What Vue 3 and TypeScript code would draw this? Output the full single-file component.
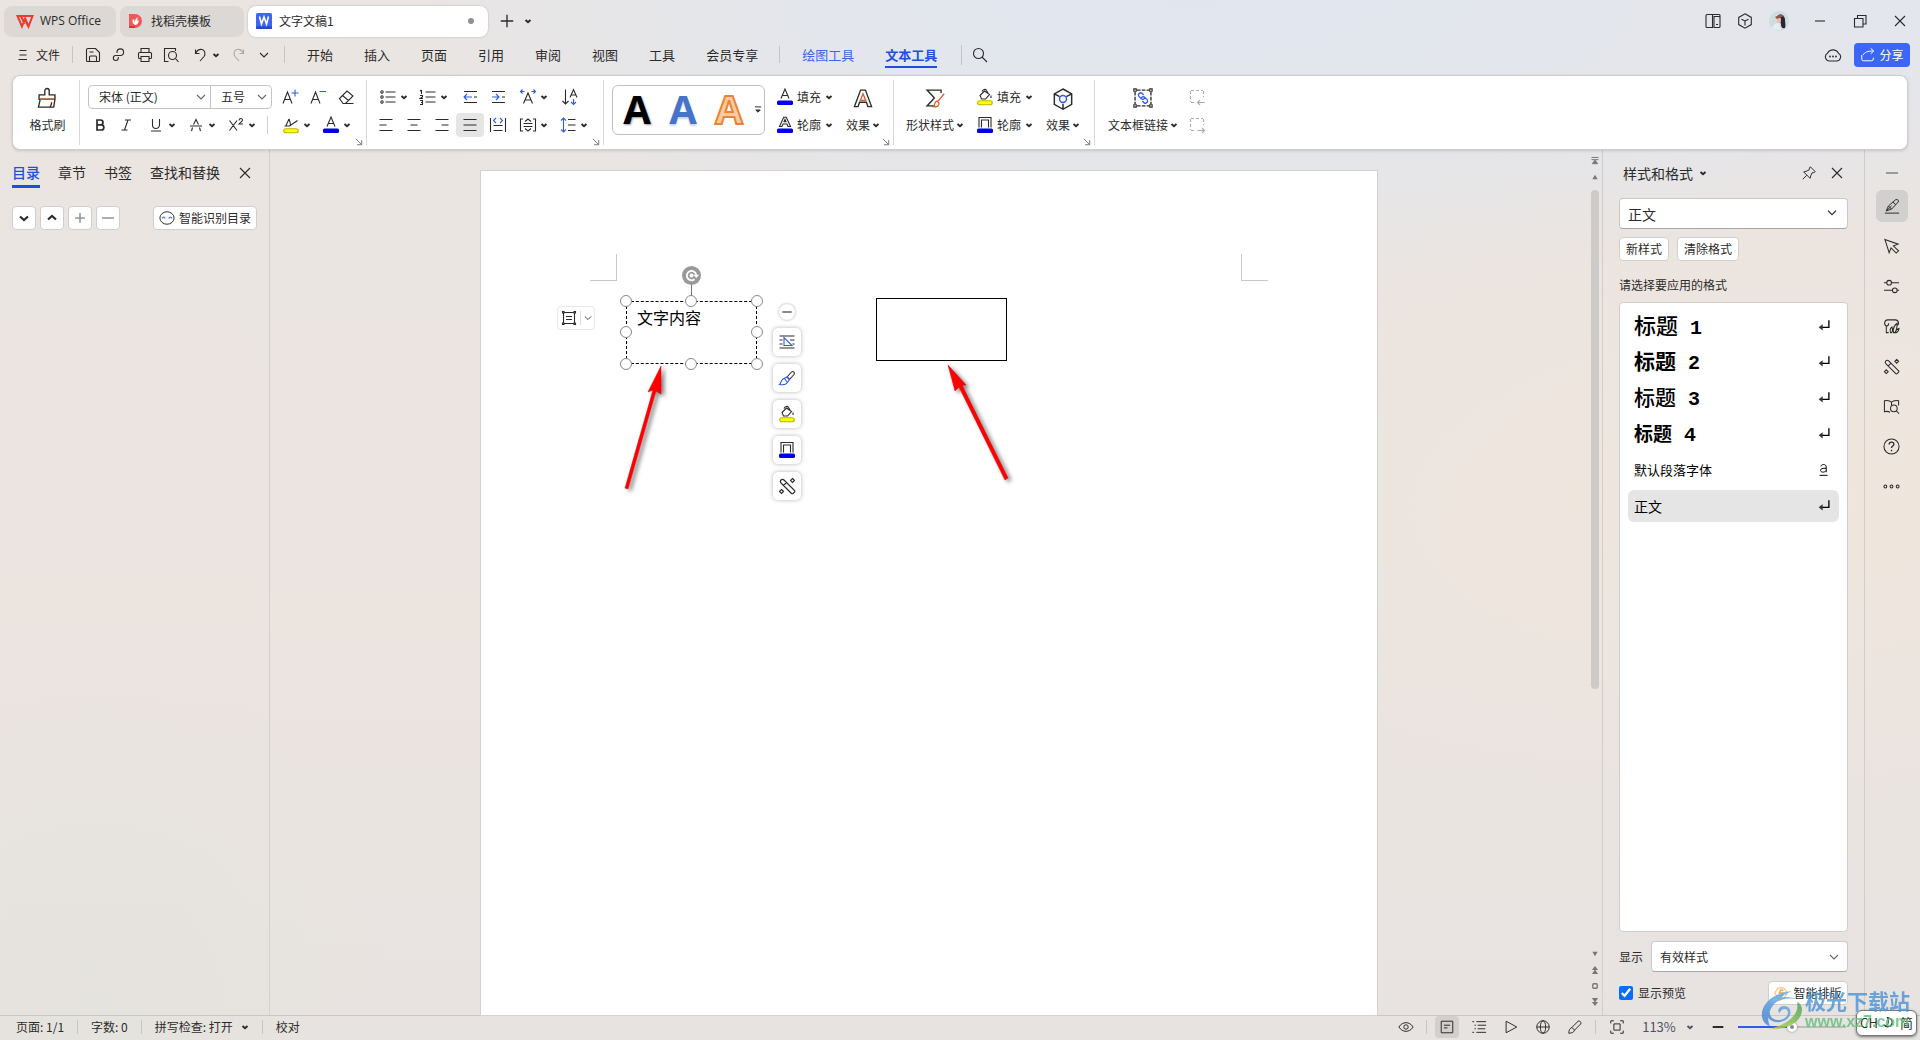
<script setup lang="ts">
import { h, ref, type FunctionalComponent } from 'vue'

const icons: Record<string, string> = {
  chev: '<path d="M6.500 8l2.500 2.300 2.500-2.300" stroke-width="1.900"/>',
  chevThin: '<path d="M5 7l4 4 4-4"/>',
  chevWide: '<path d="M4.500 6.500l4.500 4.500 4.500-4.500" stroke-width="1.300"/>',
  down: '<path d="M5 7.500l4 3.500 4-3.500" stroke-width="2.200"/>',
  up: '<path d="M5 10.500l4-3.500 4 3.500" stroke-width="2.200"/>',
  plus: '<path d="M9 4v10M4 9h10" stroke-width="1.600"/>',
  plusBig: '<path d="M9 2v14M2 9h14" stroke-width="1.500"/>',
  minus: '<path d="M3 9h12" stroke-width="1.600"/>',
  minusBold: '<path d="M3 9h12" stroke-width="2.200"/>',
  close: '<path d="M4 4l10 10M14 4L4 14"/>',
  menu: '<path d="M5.500 4.500h7M5.500 9h7M4.500 13.500h8.500"/>',
  wps: '<path d="M1.500 4h15l-4 10.500-3.300-8-3.300 8z M5 4l3.500 8M9.500 8.500L12 14" stroke="#f0382d" stroke-width="2"/>',
  docer: '<path d="M2 2h6a7 7 0 0 1 0 14H2z" fill="#f0565a" stroke="none"/><path d="M2 14h6v2H2z" fill="#d8363c" stroke="none"/><path d="M8 13c-3-2-3-4-2-6 1 1 1.500 1.500 1.800 3 .2-2 1-3.500 2.700-5 0 2 0 2.500-.5 4l1.500-1c.5 2.500-1 5-3.500 5z" fill="#fff" stroke="none"/>',
  word: '<rect x="1" y="1" width="16" height="16" rx="1.500" fill="#3d66f5" stroke="none"/><path d="M1 14.500h16v1a1.500 1.500 0 0 1-1.500 1.500h-13A1.500 1.500 0 0 1 1 15.500z" fill="#2247c9" stroke="none"/><path d="M4.500 4.500l2 7.500L9 5l2.500 7 2-7.500" stroke="#fff" stroke-width="1.600"/>',
  save: '<path d="M2.500 4a1.500 1.500 0 0 1 1.500-1.500h7.500l4 4v8a1 1 0 0 1-1 1h-11a1 1 0 0 1-1-1zM5.500 6h4M5.500 15.500V11a1 1 0 0 1 1-1h5a1 1 0 0 1 1 1v4.500"/>',
  link: '<path d="M7 7V6a3.300 3.300 0 1 1 3.300 3.500H5.800a2.500 2.500 0 1 0 2.500 2.500v-1"/>',
  print: '<path d="M5 6.500v-4h8v4M5 12.500H3.500a1 1 0 0 1-1-1v-4a1 1 0 0 1 1-1h11a1 1 0 0 1 1 1v4a1 1 0 0 1-1 1H13M5 10.500h8v5H5z"/>',
  preview: '<path d="M6.500 15.500h-4v-13h11V5"/><circle cx="10.500" cy="9.500" r="4"/><path d="M13.500 12.500l3 3.500"/>',
  undo: '<path d="M4.500 3.500v4h4M4.500 7.500c1.500-3 4-4.500 6.500-4 3 .7 3.800 4.500 2 7L9 15"/>',
  redo: '<path d="M13.500 3.500v4h-4M13.500 7.500c-1.500-3-4-4.500-6.500-4-3 .7-3.800 4.500-2 7L9 15"/>',
  search: '<circle cx="7.500" cy="7.500" r="5"/><path d="M11 11l5 5"/>',
  panel: '<path d="M3 2.500h5.500v13H3a1 1 0 0 1-1-1v-11a1 1 0 0 1 1-1zM10 4.500h5a1 1 0 0 1 1 1v9a1 1 0 0 1-1 1h-5zM8.500 2.500h6.500a1 1 0 0 1 1 1v2M12 12.500h2"/>',
  cube: '<path d="M9 1.800l6.300 3.600v7.200L9 16.200l-6.300-3.600V5.400zM5.500 7.200L9 9l3.500-1.800M9 9v4.500"/>',
  restore: '<path d="M6.500 6V3.500h8.500v8.500h-2.500M3.500 6.500h8.500v8.500H3.500z"/>',
  winMin: '<path d="M4 9h10"/>',
  cloud: '<path d="M6 15a4.200 4.200 0 0 1-2.500-7.800 6.200 6.200 0 0 1 11 0A4.200 4.200 0 0 1 12 15z"/><path d="M6 10.500h.01M9 10.500h.01M12 10.500h.01" stroke-width="1.800" stroke-linecap="round"/>',
  share: '<path d="M2 9v4.500a2 2 0 0 0 2 2h9a2 2 0 0 0 2-2V12M3.500 9c1.500-3 5-4.500 11.500-4.500M12 1.500l3.500 3L12 7.500"/>',
  brush: '<path d="M7.200 6.500V3a1.800 1.800 0 0 1 3.600 0v3.500h4.700V10H2.500V6.500zM3.500 10L2 16.500h12.500l1-6.500"/><path d="M3 10h12" stroke="#d9622b"/><path d="M11.500 16.500c1-1.500 1.200-2.500 1.300-4"/>',
  grow: '<path d="M2 15.500L6.500 4 11 15.500M3.500 11.500h6"/><path d="M10.500 5h7M14 1.500v7" stroke="#2f5be6"/>',
  shrink: '<path d="M2 15.500L6.500 4 11 15.500M3.500 11.500h6"/><path d="M10.500 3.500h6.500" stroke="#2f5be6"/>',
  eraser: '<path d="M2.500 10.500l7.500-7.500 6 5-7.500 7.500H6zM5.500 7.500l6 5M6 15.500h10.500"/>',
  bold: '<path d="M6 4h3.500a2.400 2.400 0 0 1 0 4.900H6zM6 8.900h4.300a2.500 2.500 0 0 1 0 5.100H6z" stroke-width="1.700"/>',
  italic: '<path d="M8 4h6M4.500 14h6M11 4L7.500 14"/>',
  underline: '<path d="M5.500 3v6a3.500 3.500 0 0 0 7 0V3M4 15h10"/>',
  strike: '<path d="M3 10h12M6.500 8.500L9 3.500l2.500 5M5.500 11.500L4.500 15M12.500 11.500l1 3.500"/>',
  sup: '<path d="M2.500 4.500l7.500 10M10 4.500l-7.500 10M12 4.500c0-2.500 3.500-2.500 3.500-.5 0 1.500-2.500 2.500-3.500 4h4"/>',
  marker: '<path d="M2.500 10h5l8-5.500M7 3L4 9.500M7 3c1.500 3.500 1.500 5 1.500 7" /><rect x="1.700" y="12.700" width="14.600" height="4" rx="2" fill="#ffff00" stroke="#bdb800"/>',
  fontColor: '<path d="M5 10.500L9 1l4 9.500M6.500 7.500h5"/><rect x="1" y="12.500" width="16" height="4.500" rx="1.500" fill="#0000f0" stroke="none"/>',
  fontOutline: '<path d="M3.500 10.500L7.700 1.200h2.600l4.200 9.300H12L11 8H7l-1 2.500zM8 5.800h2L9 3.500z"/><rect x="1" y="12.500" width="16" height="4.500" rx="1.500" fill="#0000f0" stroke="none"/>',
  bucket: '<path d="M4 7.500L8.500 3l5 3.500-4 4.500h-4zM6 3.500c1-2 3.500-3 4.500-1L12 5M15 7.500v2.500"/><rect x="1.700" y="12.700" width="14.600" height="4" rx="2" fill="#ffff00" stroke="#bdb800"/>',
  frameColor: '<path d="M3 11.500V1.500h12v10M5.500 11.500V4h7v7.500"/><rect x="1" y="12.500" width="16" height="4.500" rx="1.500" fill="#0000f0" stroke="none"/>',
  bullets: '<circle cx="3" cy="4" r="1.200"/><circle cx="3" cy="9" r="1.200"/><circle cx="3" cy="14" r="1.200"/><path d="M6.500 4h10M6.500 9h10M6.500 14h10"/>',
  numbers: '<path d="M2.500 2v4M1 3l1.500-1M1 7.500h2.500V9L1 10.500h3M1 12.500h2.500v4H1M2 14.500h1.500M6.500 4h10M6.500 9h10M6.500 14h10"/>',
  outdent: '<path d="M3 3.500h13M13 9h3M3 14.500h13"/><path d="M11 9H3M6 6L3 9l3 3" stroke="#2f5be6"/>',
  indent: '<path d="M3 3.500h13M13 9h3M3 14.500h13"/><path d="M3 9h7M7 6l3 3-3 3" stroke="#2f5be6"/>',
  scaleA: '<path d="M4.500 15.500L9 5l4.500 10.500M6 12h6"/><path d="M1.500 3.500h4M3.500 1.500l-2 2 2 2M16.500 3.500h-4M14.500 1.500l2 2-2 2" stroke="#2f5be6"/>',
  sort: '<path d="M4.500 1.500v14.500M1.500 13l3 3 3-3M9 9.500l3.500-8 3.500 8M10 7h5"/><path d="M12.500 11v5.500M10 14l2.500 2.500 2.500-2.500" stroke="#2f5be6"/>',
  left: '<path d="M2.500 3.500h13M2.500 9h7M2.500 14.500h13"/>',
  center: '<path d="M2.500 3.500h13M5.500 9h7M2.500 14.500h13"/>',
  right: '<path d="M2.500 3.500h13M8.500 9h7M2.500 14.500h13"/>',
  justify: '<path d="M2.500 3.500h13M2.500 9h13M2.500 14.500h13"/>',
  distribute: '<path d="M1.500 2v14M16.500 2v14M4.500 9.500h9M4.500 14.500h9"/><path d="M7 2L4.500 4.500 7 7M11 2l2.500 2.500L11 7" stroke="#2f5be6"/>',
  fitText: '<path d="M4 3H1.500v12H4M14 3h2.500v12H14M6 5.500L9 3l3 2.500M4.500 7.500h9M4.500 10.500h9M6 12.500L9 15l3-2.500"/>',
  lineSpace: '<path d="M9 3.500h7.500M9 9h7.500M9 14.500h7.500"/><path d="M4.500 2v14M2 4.500L4.500 2 7 4.500M2 13.500L4.500 16 7 13.500" stroke="#2f5be6"/>',
  more: '<path d="M5.500 5.500h7M6.500 9h5L9 11.500z" fill="#444"/>',
  launcher: '<path d="M5 5l7 7M12.500 6.500v6h-6"/>',
  textFx: '<path d="M2 16L7 2.500h4L16 16h-3l-1.200-3.500H6.200L5 16z"/><path d="M6.800 11L9 5.500l2.200 5.500z" stroke="#d9622b"/>',
  shapeStyle: '<path d="M14 5V2.500H2.500L8.500 9l-6 6.500H9"/><path d="M16.500 5.500l-5 6M10.500 11.500c-2 .3-1 3-3 4.500 3 .5 5-.5 4.800-2.800z" stroke="#d9622b"/>',
  shapeFx: '<path d="M9 1.500l6.500 3.700v7.800L9 16.700 2.500 13V5.200zM2.500 5.200l4 2M15.500 5.200l-4 2M9 12.500v4"/><circle cx="9" cy="9" r="2.600" stroke="#2f5be6"/>',
  boxLink: '<path d="M4 2.500h10M4 15.500h10M2.500 4v10M15.500 4v10" stroke-dasharray="3 1"/><path d="M1.500 1.500h2v2h-2zM14.500 1.500h2v2h-2zM1.500 14.500h2v2h-2zM14.500 14.500h2v2h-2z" stroke-width=".9"/><path d="M9.500 6.500L8 5C6.500 4 4.500 6 5.500 7.500l2 2c1 1 3 .5 3-1M8.500 11.500L10 13c1.500 1 3.500-1 2.500-2.500l-2-2c-1-1-3-.5-3 1" stroke="#2f5be6"/>',
  boxPrev: '<path d="M2.500 3v11M15.500 3v6M3 2.500h12M3 14.500h4" stroke-dasharray="3 2"/><path d="M9.500 14.500h7M12 12l-2.500 2.500L12 17"/>',
  boxNext: '<path d="M2.500 3v11M15.500 3v6M3 2.500h12M3 14.500h4" stroke-dasharray="3 2"/><path d="M9.500 14.500h7M14 12l2.500 2.500L14 17"/>',
  smart: '<ellipse cx="9" cy="9" rx="8" ry="7"/><path d="M3.500 9.500c.7-2 2.500-2 3.500 0M11 9.500c1-2 2.800-2 3.500 0" stroke="#4a7bf0" stroke-width="1.400"/>',
  pin: '<path d="M10.500 2l5.500 5.500-1.500 1-2 .3L11 12l-.8 3L3 7.800 6 7l3.200-1.500.3-2zM6.500 11.500L2 16"/>',
  pencil: '<path d="M1 17h16M2.500 14.500l2.500-5.500 8-7c2-1 4 .5 3 2.500l-7.500 8zM5 9l3.500 3.500M2.500 14.500l6-5.500M10 4.500l3.500 3.200"/>',
  cursor: '<path d="M2 1.500l14 5-5 2 5.500 5-2.500 2.500-5.500-5.500-2 5z"/>',
  sliders: '<path d="M1 5h3M9 5h8M1 13h9M15 13h2"/><circle cx="6.500" cy="5" r="2.500"/><circle cx="12.500" cy="13" r="2.500"/>',
  gallery: '<path d="M6 15.500H3.500v-7M3.500 8.500c-3-1.500-2-6.500 1.500-6.500h8c3.500 0 4.500 4 2.500 5.500M3.500 8.500c1.500 0 2.500-1 2.500-3M8 15.500c-1-3 0-5 1.500-6 1 3 .5 5-.5 6zM11 15.500c-.5-4 1-8 4-10 0 4-1 8-2.500 10zM13 15.500c.5-3 2-4 4-4.500-.5 3-1.500 4-3 4.500z"/>',
  wand: '<path d="M3 6a2 2 0 0 1 3-3l10.500 10.500a1 1 0 0 1 0 1.500L15 16.500a1 1 0 0 1-1.500 0zM8.500 5.500l-3 3"/><path d="M14.500 1.500L16.500 3.500 14.500 5.500 12.500 3.500zM3.500 12.500l2 2-2 2-2-2z"/>',
  book: '<path d="M9 4.500C7 2.500 4 2.500 1.500 3v11.500c2-.5 4-.5 6 .5M9 4.500c2-2 5-2 7.500-1.500v5M9 4.500V8"/><circle cx="11.500" cy="11" r="3.500"/><path d="M14 13.500l3 3"/>',
  help: '<circle cx="9" cy="9" r="8"/><path d="M6.500 7c0-3.500 5-3.500 5-.5 0 2-2.500 2-2.500 4M9 12.500v1.500" stroke-width="1.400"/>',
  dots: '<circle cx="2.500" cy="9" r="1.500"/><circle cx="9" cy="9" r="1.500"/><circle cx="15.500" cy="9" r="1.500"/>',
  ret: '<path d="M14.500 2.500v8H5" stroke-width="1.500"/><path d="M7.500 7v7L3 10.500z" fill="#333" stroke="none"/>',
  charA: '<path d="M5.500 5c.5-3 6-3 6 .5v6M11.500 7c-4 0-6.500.5-6.500 2.500s4.500 3 6.500 0M4 15h9"/>',
  eye: '<path d="M1 9c4-6.500 12-6.500 16 0-4 6.500-12 6.500-16 0z"/><circle cx="9" cy="9" r="2.500"/>',
  pageView: '<path d="M2.500 2.500h13v13h-13zM5.500 7h7M5.500 10h4"/>',
  outline: '<path d="M1.500 3h2M6 3h11M4 7h1.500M7.500 7H17M4 11h1.500M7.500 11H16M1.500 15h2M6 15h11"/>',
  play: '<path d="M3.500 2.500l12 6.500-12 6.500z"/>',
  globe: '<circle cx="9" cy="9" r="7"/><ellipse cx="9" cy="9" rx="3" ry="7"/><path d="M2 9h14"/>',
  pen: '<path d="M2 16c0-3 1-5.500 3.500-6.500l7-7c1.500-1 4 1 3 3l-7 7C8 15 5 16 2 16zM5.500 9.500l3 3"/>',
  fit: '<path d="M2 5V2h3.500M12.500 2H16v3M16 13v3h-3.500M5.500 16H2v-3M5.500 5.500h7v7h-7z"/>',
  layout: '<path d="M4 3.500h10M4 14.500h10M3.500 4v10M14.500 4v10M6 7.500h6M6 10.500h6"/><path d="M2.500 2.500h1.500v1.500H2.500zM14 2.500h1.500v1.500H14zM2.500 14h1.500v1.500H2.500zM14 14h1.500v1.500H14z"/>',
  wrap: '<path d="M1.500 3h15M1.500 7h3M12 7h4.500M1.500 11h3M14.500 11h2M1.500 15h15"/><path d="M6 4.500v8h8z" stroke="#2f5be6" fill="#fff"/>',
  paint: '<path d="M9 8l4.500-5c1.200-1.500 4 .5 2.500 2.500l-4.500 5z"/><path d="M9 8l2.500 2.500-2 3c-2 3-5.500 2.500-8 2 1.500-1 1-4 3.500-5.500zM6.500 9.500L9 13" stroke="#2f5be6"/>',
  typeset: '<path d="M5 2.500h8L17 9l-4 6.500H5L1 9z" stroke="#f2a33c"/><path d="M12 5.500H8.500L7 9h4.500L10 12.500H6" stroke="#f2a33c" stroke-width="1.800"/>',
  toTop: '<path d="M5 5h8M5 7.500h8M9 8l3 4H6z" fill="#777" stroke="#777"/>',
  triUp: '<path d="M9 6.500l3 5H6z" fill="#777" stroke="none"/>',
  triDown: '<path d="M9 11.500l3-5H6z" fill="#777" stroke="none"/>',
  dblUp: '<path d="M9 4.500l3.500 4.500h-7zM9 8.500l3.500 5h-7z" fill="#777" stroke="none"/>',
  dblDown: '<path d="M9 13.500l3.500-4.500h-7zM9 9.500l3.500-5h-7z" fill="#777" stroke="none"/>',
  square: '<rect x="6.500" y="6.500" width="5" height="5" rx="1" stroke="#777" stroke-width="1.500"/>',
  moon: '<path d="M7 2c6 1 8 7 4 10.500C8 15 4 14 3 12c5 1 7-5 4-10z" stroke-width="1.300"/>',
}

const Icon: FunctionalComponent<{ name: string; size?: number | string }> = (props) =>
  h('svg', {
    class: 'icon',
    width: props.size ?? 18,
    height: props.size ?? 18,
    viewBox: '0 0 18 18',
    fill: 'none',
    stroke: 'currentColor',
    'stroke-width': 1.1,
    'aria-hidden': 'true',
    innerHTML: icons[props.name],
  })
Icon.props = ['name', 'size']

const quick = [
  ['save', '保存'],
  ['link', '输出'],
  ['print', '打印'],
  ['preview', '打印预览'],
]
const menus = ['开始', '插入', '页面', '引用', '审阅', '视图', '工具', '会员专享']
const aligns = ['left', 'center', 'right', 'justify', 'distribute']
const navTabs = ['目录', '章节', '书签', '查找和替换']
const navTools = ['down', 'up', 'plus', 'minus']
const floatTools = ['wrap', 'paint', 'bucket', 'frameColor', 'wand']
const rail = ['cursor', 'sliders', 'gallery', 'wand', 'book', 'help', 'dots']
const styles = [
  { text: '标题', level: ' 1', cls: 's1', mark: 'ret' },
  { text: '标题', level: ' 2', cls: 's2', mark: 'ret' },
  { text: '标题', level: ' 3', cls: 's3', mark: 'ret' },
  { text: '标题', level: ' 4', cls: 's4', mark: 'ret' },
  { text: '默认段落字体', level: '', cls: 's5', mark: 'charA' },
  { text: '正文', level: '', cls: 's6', mark: 'ret' },
]
const handles = ['nw', 'n', 'ne', 'w', 'e', 'sw', 's', 'se']
const current = ref(5)
const preview = ref(true)
const zoom = ref(50)
</script>

<template>
  <div class="app">
    <header class="title-bar">
      <button class="tab home"><Icon name="wps" />WPS Office</button>
      <button class="tab docer"><Icon name="docer" />找稻壳模板</button>
      <button class="tab doc active"><Icon name="word" />文字文稿1<span class="dirty"></span></button>
      <button class="tab-add" aria-label="新建"><Icon name="plusBig" size="16" /></button>
      <button class="tab-more" aria-label="标签列表"><Icon name="chev" /></button>
      <div class="spacer"></div>
      <button class="tb-icon" aria-label="侧栏"><Icon name="panel" /></button>
      <button class="tb-icon" aria-label="应用"><Icon name="cube" /></button>
      <button class="avatar" aria-label="账户">
        <svg width="20" height="20" viewBox="0 0 20 20">
          <circle cx="10" cy="10" r="10" fill="#cfdde2" />
          <path d="M9 4c4-1 7 1 7 5 0 3 1 5 0 8-3 1-4-1-4-4z" fill="#2c2430" />
          <path d="M8 6c2-1 4 0 4 3s-2 4-4 3z" fill="#e9bfae" />
          <path d="M6 6l6-3 3 2-7 3z" fill="#8d5a4a" />
          <path d="M3 18c1-4 3-6 7-6l2 7z" fill="#e4eef0" />
        </svg>
      </button>
      <button class="win" aria-label="最小化"><Icon name="winMin" /></button>
      <button class="win" aria-label="还原"><Icon name="restore" /></button>
      <button class="win" aria-label="关闭"><Icon name="close" /></button>
    </header>

    <nav class="menu-bar">
      <button class="file"><Icon name="menu" />文件</button>
      <i class="bar-line"></i>
      <div class="quick">
        <button v-for="q in quick" :key="q[0]" class="q-btn" :aria-label="q[1]"><Icon :name="q[0]" /></button>
        <button class="split" aria-label="撤销"><Icon name="undo" /><Icon class="c" name="chev" /></button>
        <button class="redo" aria-label="恢复"><Icon name="redo" /></button>
        <button class="q-more" aria-label="更多"><Icon name="chevThin" /></button>
      </div>
      <i class="bar-line"></i>
      <div class="menus">
        <a v-for="m in menus" :key="m" href="#">{{ m }}</a>
      </div>
      <i class="bar-line"></i>
      <div class="menus">
        <a href="#" class="tool">绘图工具</a>
        <a href="#" class="tool on">文本工具</a>
      </div>
      <i class="bar-line last"></i>
      <button class="find" aria-label="搜索"><Icon name="search" /></button>
      <div class="spacer"></div>
      <button class="cloud" aria-label="云同步"><Icon name="cloud" /></button>
      <button class="share"><Icon name="share" size="16" />分享</button>
    </nav>

    <section class="ribbon">
      <div class="group g-brush">
        <button class="big"><Icon name="brush" size="22" /><span>格式刷</span></button>
      </div>
      <div class="group g-font">
        <div class="row">
          <div class="combo">
            <label class="pick family">
              <select aria-label="字体"><option>宋体 (正文)</option></select><Icon name="chevThin" />
            </label>
            <label class="pick size">
              <select aria-label="字号"><option>五号</option></select><Icon name="chevThin" />
            </label>
          </div>
          <button class="ib" aria-label="增大字号"><Icon name="grow" /></button>
          <button class="ib" aria-label="减小字号"><Icon name="shrink" /></button>
          <button class="ib" aria-label="清除格式"><Icon name="eraser" /></button>
        </div>
        <div class="row">
          <button class="ib" aria-label="加粗"><Icon name="bold" /></button>
          <button class="ib" aria-label="倾斜"><Icon name="italic" /></button>
          <button class="split" aria-label="下划线"><Icon name="underline" /><Icon class="c" name="chev" /></button>
          <button class="split" aria-label="删除线"><Icon name="strike" /><Icon class="c" name="chev" /></button>
          <button class="split" aria-label="上标"><Icon name="sup" /><Icon class="c" name="chev" /></button>
          <i class="mini-line"></i>
          <button class="split" aria-label="突出显示"><Icon name="marker" /><Icon class="c" name="chev" /></button>
          <button class="split" aria-label="字体颜色"><Icon name="fontColor" /><Icon class="c" name="chev" /></button>
        </div>
        <button class="launch" aria-label="字体设置"><Icon name="launcher" size="14" /></button>
      </div>
      <div class="group g-para">
        <div class="row">
          <button class="split" aria-label="项目符号"><Icon name="bullets" /><Icon class="c" name="chev" /></button>
          <button class="split" aria-label="编号"><Icon name="numbers" /><Icon class="c" name="chev" /></button>
          <button class="ib after-split" aria-label="减少缩进"><Icon name="outdent" /></button>
          <button class="ib" aria-label="增加缩进"><Icon name="indent" /></button>
          <button class="split" aria-label="字符缩放"><Icon name="scaleA" /><Icon class="c" name="chev" /></button>
          <button class="ib wide" aria-label="排序"><Icon name="sort" /></button>
        </div>
        <div class="row">
          <button v-for="a in aligns" :key="a" class="ib" :class="{ pressed: a === 'justify' }" :aria-label="a">
            <Icon :name="a" />
          </button>
          <button class="split" aria-label="文本方向"><Icon name="fitText" /><Icon class="c" name="chev" /></button>
          <button class="split" aria-label="行距"><Icon name="lineSpace" /><Icon class="c" name="chev" /></button>
        </div>
        <button class="launch" aria-label="段落设置"><Icon name="launcher" size="14" /></button>
      </div>
      <div class="group g-art">
        <div class="gallery">
          <button class="art black">A</button>
          <button class="art blue">A</button>
          <button class="art orange">A</button>
          <button class="gal-more" aria-label="更多样式"><Icon name="more" size="16" /></button>
        </div>
        <div class="stack">
          <button class="lab"><Icon name="fontColor" />填充<Icon class="c" name="chev" /></button>
          <button class="lab"><Icon name="fontOutline" />轮廓<Icon class="c" name="chev" /></button>
        </div>
        <button class="big fx"><Icon name="textFx" size="22" /><span>效果<Icon class="c" name="chev" /></span></button>
        <button class="launch" aria-label="文本效果设置"><Icon name="launcher" size="14" /></button>
      </div>
      <div class="group g-shape">
        <button class="big style"><Icon name="shapeStyle" size="22" /><span>形状样式<Icon class="c" name="chev" /></span></button>
        <div class="stack">
          <button class="lab"><Icon name="bucket" />填充<Icon class="c" name="chev" /></button>
          <button class="lab"><Icon name="frameColor" />轮廓<Icon class="c" name="chev" /></button>
        </div>
        <button class="big fx"><Icon name="shapeFx" size="24" /><span>效果<Icon class="c" name="chev" /></span></button>
        <button class="launch" aria-label="形状设置"><Icon name="launcher" size="14" /></button>
      </div>
      <div class="group g-link">
        <button class="big"><Icon name="boxLink" size="22" /><span>文本框链接<Icon class="c" name="chev" /></span></button>
        <div class="stack dim">
          <button class="ib" aria-label="前一文本框"><Icon name="boxPrev" /></button>
          <button class="ib" aria-label="后一文本框"><Icon name="boxNext" /></button>
        </div>
      </div>
    </section>

    <div class="work">
      <aside class="nav">
        <div class="nav-tabs">
          <a v-for="(t, i) in navTabs" :key="t" href="#" :class="{ on: i === 0 }">{{ t }}</a>
          <button aria-label="关闭导航"><Icon name="close" /></button>
        </div>
        <div class="nav-tools">
          <button v-for="t in navTools" :key="t" class="sq" :class="t" :aria-label="t"><Icon :name="t" size="18" /></button>
          <button class="white smart"><Icon name="smart" size="16" />智能识别目录</button>
        </div>
      </aside>

      <main class="canvas">
        <div class="page">
          <i class="corner tl"></i>
          <i class="corner tr"></i>
          <button class="anchor" aria-label="布局选项"><Icon name="layout" /><i></i><Icon class="c" name="chevThin" size="14" /></button>
          <div class="textbox">
            文字内容
            <i class="stem"></i>
            <span class="rotate">
              <svg width="19" height="19" viewBox="0 0 19 19">
                <circle cx="9.500" cy="9.500" r="9.500" fill="#999" />
                <path d="M12.500 13.200a4.700 4.700 0 1 1 1.700-4" fill="none" stroke="#fff" stroke-width="1.800" />
                <path d="M11.500 8.800h5.500l-2.700 3.400z" fill="#fff" />
                <circle cx="9.500" cy="9.500" r="2" fill="#fff" />
              </svg>
            </span>
            <i v-for="p in handles" :key="p" class="handle" :class="p"></i>
          </div>
          <div class="plainbox"></div>
          <div class="float-bar">
            <button class="collapse" aria-label="收起"><Icon name="minusBold" size="14" /></button>
            <button v-for="f in floatTools" :key="f" class="ft" :aria-label="f"><Icon :name="f" /></button>
          </div>
          <svg class="arrows" width="420" height="150" viewBox="0 0 420 150" aria-hidden="true">
            <g fill="#f00" stroke="#e00000" stroke-width=".5">
              <path d="M40 5L27 31 32 29 4 127 7 128 35 30 40 33z" />
              <path d="M327 4L334 30 338 26 384 119 387 117 341 24 345 24z" />
            </g>
          </svg>
        </div>
      </main>

      <div class="scroll">
        <Icon name="toTop" /><Icon name="triUp" />
        <div class="track"><div class="thumb"></div></div>
        <Icon name="triDown" /><Icon name="dblUp" /><Icon name="square" /><Icon name="dblDown" />
      </div>

      <aside class="styles">
        <div class="s-head">
          <button class="s-title">样式和格式<Icon class="c" name="chev" /></button>
          <div class="spacer"></div>
          <button aria-label="固定"><Icon name="pin" size="16" /></button>
          <button aria-label="关闭"><Icon name="close" /></button>
        </div>
        <label class="pick field cur">
          <select aria-label="当前样式"><option>正文</option></select><Icon name="chevWide" size="16" />
        </label>
        <div class="s-btns">
          <button class="white">新样式</button>
          <button class="white">清除格式</button>
        </div>
        <p class="hint">请选择要应用的格式</p>
        <ul class="list">
          <li v-for="(s, i) in styles" :key="s.cls">
            <button :class="[s.cls, { sel: i === current }]" @click="current = i">
              <span>{{ s.text }}<b>{{ s.level }}</b></span><Icon :name="s.mark" size="16" />
            </button>
          </li>
        </ul>
        <div class="s-show">
          <label for="show">显示</label>
          <span class="pick field">
            <select id="show"><option>有效样式</option></select><Icon name="chevThin" />
          </span>
        </div>
        <div class="s-foot">
          <label class="check"><input v-model="preview" type="checkbox" />显示预览</label>
          <button class="white"><Icon name="typeset" size="14" />智能排版</button>
        </div>
      </aside>

      <aside class="rail">
        <button class="r-min" aria-label="收起"><Icon name="minus" /></button>
        <button class="on" aria-label="样式"><Icon name="pencil" size="16" /></button>
        <button v-for="r in rail" :key="r" :aria-label="r"><Icon :name="r" size="17" /></button>
      </aside>
    </div>

    <footer class="status">
      <span>页面: 1/1</span><i></i><span>字数: 0</span><i></i>
      <button class="spell">拼写检查: 打开<Icon class="c" name="chev" /></button><i></i><span>校对</span>
      <div class="spacer"></div>
      <div class="views">
        <button aria-label="护眼模式"><Icon name="eye" size="16" /></button><i></i>
        <button class="on" aria-label="页面视图"><Icon name="pageView" size="16" /></button>
        <button aria-label="大纲"><Icon name="outline" size="16" /></button>
        <button aria-label="阅读"><Icon name="play" size="16" /></button>
        <button aria-label="Web 版式"><Icon name="globe" size="16" /></button>
        <button aria-label="写作模式"><Icon name="pen" size="16" /></button><i></i>
        <button class="fitb" aria-label="最佳缩放"><Icon name="fit" size="16" /></button>
        <button class="zoom">113%<Icon class="c" name="chev" /></button>
        <button aria-label="缩小"><Icon name="minusBold" size="16" /></button>
        <input v-model="zoom" type="range" min="0" max="100" aria-label="缩放" />
      </div>
    </footer>

    <div class="ime">CH<Icon name="moon" size="14" />简</div>
    <div class="mark">
      <svg width="46" height="46" viewBox="0 0 46 46" aria-hidden="true">
        <defs>
          <linearGradient id="sw1" x1="0" y1="1" x2="1" y2="0">
            <stop offset="0" stop-color="#3a7fd0" /><stop offset="1" stop-color="#6fb8ea" />
          </linearGradient>
          <linearGradient id="sw2" x1="0" y1="1" x2="1" y2="0">
            <stop offset="0" stop-color="#c9da45" /><stop offset="1" stop-color="#3aa05a" />
          </linearGradient>
        </defs>
        <path d="M33 4C16 5 1 17 3 30c1 5 4 8 8 9-6-12 4-27 22-35z" fill="url(#sw1)" />
        <path d="M37 12C22 9 9 18 11 27c1 6 9 8 15 4 4-3 4-8 0-9-3 0-5 2-5 4-3-1-2-6 3-7 8-1 10 8 4 13-8 6-19 3-20-5C6 15 22 6 37 12z" fill="url(#sw1)" />
        <path d="M9 42c14 2 33-4 34-19 0-4-2-7-5-8 3 12-9 23-29 27z" fill="url(#sw2)" />
      </svg>
      <div class="mark-text"><b>极光下载站</b><em>www.xz7.com</em></div>
    </div>
  </div>
</template>

<style>
body {
  margin: 0;
}
</style>

<style scoped>
* {
  box-sizing: border-box;
}
.app {
  position: relative;
  display: flex;
  flex-direction: column;
  min-height: 100vh;
  font: 12px/16px 'Noto Sans CJK SC', sans-serif;
  color: #2b2b2b;
  overflow: hidden;
  background:
    radial-gradient(ellipse 900px 300px at 62% 0, #e1e5ef 0%, #e3e6ec 40%, rgba(227, 230, 236, 0) 100%),
    radial-gradient(ellipse 700px 240px at 100% 0, #e3e6ee 0%, rgba(227, 230, 236, 0) 100%),
    radial-gradient(ellipse 600px 300px at 92% 48%, #f0e6dd 0%, rgba(240, 230, 221, 0) 100%),
    radial-gradient(ellipse 300px 400px at 5% 100%, #e5e3dd 0%, rgba(229, 227, 221, 0) 100%),
    linear-gradient(#eae5e1, #ebe4df 60%, #e7e3e1);
}
button,
select,
input {
  font: inherit;
  color: inherit;
  margin: 0;
}
button {
  display: flex;
  align-items: center;
  justify-content: center;
  padding: 0;
  border: 0;
  background: none;
  white-space: nowrap;
}
a {
  color: inherit;
  text-decoration: none;
}
.icon {
  display: block;
  flex: none;
}
.icon.c {
  margin: 0 -5px;
}
.spacer {
  flex: 1;
}

/* title bar */
.title-bar {
  display: flex;
  align-items: center;
  height: 38px;
  padding: 4px 0 0 4px;
}
.tab {
  height: 31px;
  border-radius: 8px;
  background: #dbd8d5;
  justify-content: flex-start;
  padding-left: 12px;
  gap: 6px;
  margin-right: 4px;
}
.tab.home {
  width: 112px;
  font-family: 'Open Sans', 'Noto Sans CJK SC', sans-serif;
}
.tab.docer {
  width: 124px;
  padding-left: 7px;
}
.tab.doc {
  width: 240px;
  padding: 0 14px 0 7px;
  background: #fff;
  box-shadow: 0 0 2px rgba(0, 0, 0, 0.25);
}
.dirty {
  width: 6px;
  height: 6px;
  margin-left: auto;
  border-radius: 50%;
  background: #919191;
}
.tab-add {
  width: 30px;
  height: 30px;
}
.tab-more {
  width: 12px;
}
.tb-icon {
  width: 32px;
  height: 30px;
}
.avatar {
  margin: 0 11px 0 8px;
}
.win {
  width: 40px;
  height: 30px;
}

/* menu bar */
.menu-bar {
  display: flex;
  align-items: center;
  height: 37px;
  padding: 0 10px 4px 14px;
}
.file {
  gap: 4px;
  margin-right: 12px;
}
.bar-line {
  width: 1px;
  height: 17px;
  background: #c6c5c6;
}
.bar-line.last {
  height: 20px;
  margin-left: 24px;
}
.quick {
  display: flex;
  padding: 0 10px 0 7px;
}
.q-btn {
  width: 26px;
  height: 28px;
}
.redo {
  width: 30px;
  color: #aaa;
}
.q-more {
  width: 20px;
}
.menus {
  display: flex;
  gap: 31px;
  margin: 0 21px 0 22px;
  font-size: 13px;
}
.menus:has(.on) {
  margin-right: 0;
}
.menus a {
  padding-top: 2px;
  border-bottom: 2px solid transparent;
  line-height: 22px;
}
.menus .tool {
  color: #3f66ea;
}
.menus .on {
  font-weight: 700;
  color: #1f4fe0;
  border-color: #1f4fe0;
}
.find {
  margin-left: 9px;
}
.cloud {
  margin-right: 12px;
}
.share {
  width: 56px;
  height: 24px;
  gap: 3px;
  border-radius: 4px;
  background: #3c66fa;
  color: #fff;
}

/* ribbon */
.ribbon {
  display: flex;
  height: 75px;
  margin: 0 12px;
  border: 1px solid #cfcdcc;
  border-radius: 8px;
  background: #fff;
  box-shadow: 0 1px 3px rgba(0, 0, 0, 0.14);
  position: relative;
}
.group {
  position: relative;
  display: flex;
  padding: 7px 0 0 8px;
}
.group:not(:last-child)::after {
  content: '';
  position: absolute;
  right: 0;
  top: 4px;
  bottom: 4px;
  width: 1px;
  background: #d8d8d8;
}
.g-brush {
  width: 67px;
  padding-left: 2px;
  justify-content: center;
}
.g-font,
.g-para {
  flex-direction: column;
}
.g-font {
  width: 287px;
}
.g-para {
  width: 237px;
  padding-left: 5px;
}
.g-art {
  width: 290px;
}
.g-shape {
  width: 201px;
}
.g-link {
  padding-left: 13px;
}
.row {
  display: flex;
  align-items: center;
  height: 28px;
}
.ib {
  width: 28px;
  height: 28px;
}
.ib.wide {
  width: 36px;
}
.ib.after-split {
  margin-left: 4px;
}
.g-font .ib:first-child {
  width: 24px;
}
.combo + .ib {
  margin-left: 4px;
}
.split {
  width: 32px;
  height: 28px;
  margin: 0 4px;
  justify-content: flex-start;
  padding-left: 3px;
}
.split .c {
  margin: 0 0 0 -2px;
}
.pressed {
  border-radius: 4px;
  background: #e5e5e5;
  height: 24px;
}
.mini-line {
  width: 1px;
  height: 18px;
  margin: 0 7px;
  background: #d0d0d0;
}
.launch {
  position: absolute;
  right: 1px;
  bottom: 0;
  color: #666;
}
.combo {
  display: flex;
  width: 184px;
  height: 24px;
  border: 1px solid #c4c4c4;
  border-radius: 4px;
}
.pick {
  position: relative;
  display: flex;
}
.pick select {
  flex: 1;
  min-width: 0;
  padding: 0 0 0 10px;
  border: 0;
  background: none;
  appearance: none;
  outline: 0;
}
.pick .icon {
  position: absolute;
  right: 0;
  top: calc(50% - 9px);
  color: #666;
  pointer-events: none;
}
.family {
  width: 122px;
  border-right: 1px solid #c4c4c4;
}
.size {
  flex: 1;
}
.big {
  flex-direction: column;
  justify-content: flex-start;
  padding-top: 4px;
  height: 51px;
}
.big span {
  display: flex;
  align-items: center;
  margin-top: auto;
  height: 18px;
}
.big .icon.c {
  margin: 0 -6px 0 -3px;
}
.gallery {
  display: flex;
  align-items: center;
  width: 153px;
  height: 50px;
  margin: 2px 11px 0 0;
  padding-left: 1px;
  border: 1px solid #bfbfbf;
  border-radius: 6px;
}
.art {
  width: 46px;
  height: 46px;
  padding-bottom: 2px;
  font: 700 40px/44px 'Open Sans', sans-serif;
}
.black {
  color: #000;
  text-shadow: 1px 1px 2px rgba(0, 0, 0, 0.4);
}
.blue {
  color: #4674c8;
  text-shadow: 0 2px 2px rgba(70, 116, 200, 0.3);
}
.orange {
  color: #f8cba6;
  -webkit-text-stroke: 2px #ee822f;
}
.gal-more {
  width: 12px;
}
.lab {
  height: 28px;
  gap: 3px;
}
.lab .icon.c {
  margin: 0 -4px 0 -4px;
}
.fx {
  margin-left: 12px;
}
.style {
  margin: 0 13px 0 4px;
}
.dim {
  margin-left: 6px;
  color: #aaa;
}

/* work area */
.work {
  display: flex;
  flex: 1;
}
.nav {
  width: 270px;
  border-right: 1px solid #d4d0ce;
}
.nav-tabs {
  display: flex;
  align-items: flex-start;
  gap: 18px;
  padding: 11px 12px 0;
  font-size: 14px;
}
.nav-tabs a {
  line-height: 22px;
  padding-bottom: 2px;
  border-bottom: 3px solid transparent;
}
.nav-tabs .on {
  color: #1f4fe0;
  border-color: #1f4fe0;
  font-weight: 500;
}
.nav-tabs button {
  height: 24px;
  margin-left: -2px;
}
.nav-tools {
  display: flex;
  gap: 4px;
  padding: 18px 12px 0;
}
.sq,
.white {
  height: 24px;
  border: 1px solid #d2cecb;
  border-radius: 4px;
  background: #fff;
}
.sq {
  width: 24px;
}
.sq.plus,
.sq.minus {
  color: #999;
}
.smart {
  width: 104px;
  margin-left: auto;
  gap: 4px;
}
.canvas {
  flex: 1;
  display: flex;
  justify-content: center;
  padding-top: 21px;
}
.page {
  position: relative;
  width: 896px;
  background: #fff;
  box-shadow: 0 0 0 1px #d5d1cf;
}
.corner {
  position: absolute;
  top: 83px;
  width: 27px;
  height: 27px;
  border-bottom: 1px solid #c8c8c8;
}
.tl {
  left: 109px;
  border-right: 1px solid #c8c8c8;
}
.tr {
  left: 760px;
  border-left: 1px solid #c8c8c8;
}
.anchor {
  position: absolute;
  left: 76px;
  top: 135px;
  width: 38px;
  height: 24px;
  gap: 2px;
  border: 1px solid #e6e6e6;
  border-radius: 4px;
}
.anchor i {
  width: 1px;
  height: 14px;
  background: #ddd;
}
.anchor .c {
  margin: 0 -2px;
}
.textbox {
  position: absolute;
  left: 145px;
  top: 130px;
  width: 131px;
  height: 63px;
  padding: 4px 10px;
  border: 1px dashed #000;
  font-size: 16px;
  line-height: 22px;
  color: #000;
}
.stem {
  position: absolute;
  left: 64px;
  top: -18px;
  width: 1px;
  height: 18px;
  background: #777;
}
.rotate {
  position: absolute;
  left: 55px;
  top: -36px;
}
.rotate svg {
  display: block;
}
.handle {
  position: absolute;
  width: 12px;
  height: 12px;
  border: 1px solid #888;
  border-radius: 50%;
  background: #fff;
}
.nw,
.w,
.sw {
  left: -7px;
}
.n,
.s {
  left: 58px;
}
.ne,
.e,
.se {
  right: -7px;
}
.nw,
.n,
.ne {
  top: -7px;
}
.w,
.e {
  top: 24px;
}
.sw,
.s,
.se {
  bottom: -7px;
}
.plainbox {
  position: absolute;
  left: 395px;
  top: 127px;
  width: 131px;
  height: 63px;
  border: 1px solid #000;
}
.float-bar {
  position: absolute;
  left: 292px;
  top: 133px;
  display: flex;
  flex-direction: column;
  align-items: center;
  gap: 8px;
}
.collapse {
  width: 16px;
  height: 16px;
  border-radius: 50%;
  background: #fff;
  box-shadow: 0 0 3px rgba(0, 0, 0, 0.35);
  color: #777;
}
.ft {
  width: 28px;
  height: 28px;
  border-radius: 5px;
  background: #fff;
  box-shadow: 0 0 4px rgba(0, 0, 0, 0.3);
}
.arrows {
  position: absolute;
  left: 140px;
  top: 190px;
  filter: drop-shadow(3px 2px 2px rgba(0, 0, 0, 0.5));
}
.scroll {
  display: flex;
  flex-direction: column;
  align-items: center;
  width: 14px;
  padding: 3px 0 5px;
}
.scroll .icon {
  width: 16px;
  height: 16px;
}
.track {
  flex: 1;
  width: 8px;
  padding-top: 5px;
}
.thumb {
  height: 66%;
  border-radius: 4px;
  background: #cdcac8;
}

/* style pane */
.styles {
  display: flex;
  flex-direction: column;
  width: 263px;
  padding: 0 16px 10px;
  border-left: 1px solid #d0cecd;
  border-right: 1px solid #d0cecd;
}
.s-head {
  display: flex;
  align-items: center;
  height: 48px;
  padding: 0 2px 2px 4px;
  gap: 11px;
}
.s-title {
  font-size: 14px;
  gap: 6px;
}
.field {
  height: 31px;
  border: 1px solid #cbc9c8;
  border-bottom-color: #a9a7a6;
  border-radius: 4px;
  background: #fff;
}
.field .icon {
  right: 4px;
}
.cur {
  flex: none;
  font-size: 14px;
}
.cur select {
  padding-left: 8px;
}
.cur .icon {
  right: 7px;
  color: #333;
}
.s-btns {
  display: flex;
  gap: 8px;
  padding-top: 8px;
}
.s-btns .white {
  padding: 0 6px;
}
.hint {
  margin: 0;
  padding: 16px 0 9px;
}
.list {
  flex: 1;
  margin: 0;
  padding: 7px 8px;
  border: 1px solid #d0cecd;
  border-radius: 4px;
  background: #fff;
  list-style: none;
  color: #000;
}
.list button {
  width: 100%;
  height: 32px;
  margin-bottom: 4px;
  padding: 0 7px 0 6px;
  justify-content: space-between;
  border-radius: 6px;
}
.list .sel {
  background: #e5e5e5;
}
.list .s1 {
  font-size: 22px;
  font-weight: 500;
}
.list .s2 {
  font-size: 21px;
  font-weight: 700;
}
.list .s3 {
  font-size: 21px;
  font-weight: 500;
}
.list .s4 {
  font-size: 19px;
  font-weight: 700;
}
.list .s5 {
  font-size: 13px;
}
.list .s6 {
  font-size: 14px;
}
.list span {
  white-space: pre;
}
.list b {
  font-family: 'Liberation Mono', monospace;
  font-size: 20px;
  font-weight: 700;
}
.s-show {
  display: flex;
  align-items: center;
  gap: 8px;
  padding: 9px 0;
}
.s-show .field {
  flex: 1;
}
.s-show select {
  padding-left: 8px;
}
.s-foot {
  display: flex;
  align-items: center;
  justify-content: space-between;
}
.s-foot .white {
  width: 80px;
  gap: 5px;
}
.check {
  display: flex;
  align-items: center;
  gap: 5px;
}
.check input {
  width: 14px;
  height: 14px;
  accent-color: #0a6cff;
}

/* right rail */
.rail {
  display: flex;
  flex-direction: column;
  align-items: center;
  gap: 8px;
  width: 55px;
  padding: 14px 2px 0 0;
}
.rail button {
  width: 32px;
  height: 32px;
  border-radius: 6px;
}
.rail .r-min {
  height: 18px;
  color: #888;
}
.rail .on {
  background: #d2d0cf;
}

/* status bar */
.status {
  display: flex;
  align-items: center;
  height: 25px;
  padding: 0 74px 2px 16px;
  border-top: 1px solid #c9c6c5;
}
.status i {
  width: 1px;
  height: 14px;
  margin: 0 13px;
  background: #c9c6c5;
}
.spell {
  gap: 8px;
}
.views {
  display: flex;
  align-items: center;
  gap: 8px;
}
.views i {
  margin: 0;
}
.views button {
  width: 24px;
  height: 22px;
}
.views .on {
  border-radius: 4px;
  background: #d2cfcd;
}
.views .fitb {
  width: 26px;
}
.views .zoom {
  width: 60px;
  gap: 10px;
  font-size: 13px;
  color: #4d5266;
}
.views input {
  appearance: none;
  width: 108px;
  height: 2px;
  background: linear-gradient(90deg, #2f5be6 50%, #bdbbbb 50%);
}
.views input::-webkit-slider-thumb {
  appearance: none;
  width: 10px;
  height: 10px;
  border: 3px solid #fff;
  border-radius: 50%;
  background: #888;
  box-shadow: 0 0 2px rgba(0, 0, 0, 0.5);
}

/* input-method badge and site mark, both over the page */
.ime {
  position: absolute;
  right: 3px;
  bottom: 4px;
  display: flex;
  align-items: center;
  justify-content: center;
  gap: 4px;
  width: 61px;
  height: 26px;
  padding-bottom: 1px;
  border: 1px solid #777;
  border-radius: 6px;
  background: #fff;
  box-shadow: 0 1px 3px rgba(0, 0, 0, 0.5);
  font-size: 13px;
}
.mark {
  position: absolute;
  right: 10px;
  bottom: 7px;
  display: flex;
  align-items: center;
  opacity: 0.8;
  pointer-events: none;
}
.mark-text {
  display: flex;
  flex-direction: column;
}
.mark b {
  font-size: 21px;
  line-height: 24px;
  color: #4c93d6;
}
.mark em {
  font: 700 16px/20px 'Liberation Sans', sans-serif;
  color: #5fbf7a;
}
</style>
